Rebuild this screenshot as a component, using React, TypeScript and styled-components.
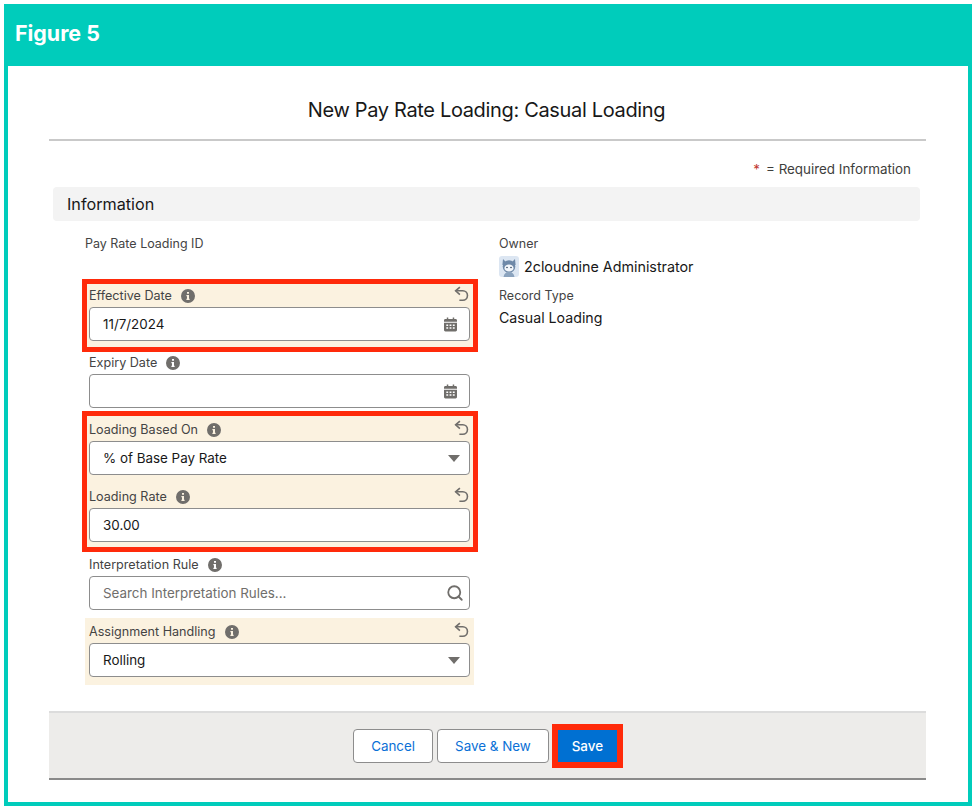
import React from 'react';
import styled, { createGlobalStyle } from 'styled-components';
import { Search } from 'lucide-react';

const GlobalStyle = createGlobalStyle`
  html, body {
    margin: 0;
    padding: 0;
    background: #fff;
    font-family: Inter, "Liberation Sans", sans-serif;
    color: #181818;
  }
  * {
    box-sizing: border-box;
  }
`;

const Frame = styled.div`
  width: 968px;
  height: 802px;
  margin: 4px;
  border: 4px solid #00ccbb;
  border-top: 0;
  background: #fff;
`;

const Banner = styled.div`
  height: 62px;
  margin: 0 -4px;
  padding: 0 11px 4px;
  display: flex;
  align-items: center;
  background: #00ccbb;
  color: #fff;
  font-size: 21.4px;
  font-weight: 700;
`;

const Modal = styled.div`
  padding: 0 42px 0 41px;
`;

const Title = styled.h1`
  height: 75px;
  margin: 0;
  padding: 31px 2px 0 0;
  border-bottom: 2px solid #c9c9c9;
  text-align: center;
  font-size: 20px;
  line-height: 26px;
  font-weight: 400;
  letter-spacing: -0.34px;
`;

const RequiredNote = styled.div`
  height: 46px;
  padding: 19px 15px 0 0;
  text-align: right;
  font-size: 13.4px;
  line-height: 18px;
  color: #3e3e3c;

  span {
    margin-right: 6px;
    color: #c23934;
  }
`;

const SectionHeader = styled.div`
  height: 34px;
  margin: 0 6px 0 4px;
  padding-left: 14px;
  display: flex;
  align-items: center;
  background: #f3f3f3;
  border-radius: 4px;
  font-size: 16.2px;
`;

const FormGrid = styled.div`
  display: grid;
  grid-template-columns: 389px 1fr;
  column-gap: 25px;
  padding: 9px 0 0 36px;
`;

const Column = styled.div`
  display: flex;
  flex-direction: column;
`;

const StaticLabel = styled.div`
  height: 26px;
  font-size: 12.5px;
  line-height: 28px;
  color: #444;
`;

const IdBlock = styled.div`
  height: 52px;
`;

const Highlight = styled.div<{ $top?: number; $bottom?: number }>`
  position: relative;

  &::after {
    content: '';
    position: absolute;
    top: ${props => -(props.$top ?? 3)}px;
    bottom: ${props => -(props.$bottom ?? 3)}px;
    left: -3px;
    right: -4px;
    border: 5px solid #ff2a0a;
    pointer-events: none;
  }
`;

const Field = styled.div<{ $changed?: boolean; $gap?: number }>`
  height: 67px;
  margin-top: ${props => props.$gap ?? 0}px;
  padding: 0 4px;
  background: ${props => (props.$changed ? '#fbf2e0' : 'transparent')};
`;

const LabelRow = styled.div`
  height: 25px;
  display: flex;
  align-items: center;
  gap: 9px;
  padding-top: 2px;
  font-size: 12.6px;
  color: #444;
`;

const ResetSvg = styled.svg`
  width: 15px;
  height: 16px;
  margin-left: auto;
  margin-right: 1px;
  margin-top: -4px;
  fill: none;
  stroke: #706e6b;
  stroke-width: 1.5;
`;

const InputBox = styled.div`
  height: 34px;
  padding: 0 8px 0 13px;
  display: flex;
  align-items: center;
  justify-content: space-between;
  background: #fff;
  border: 1px solid #8d8d8d;
  border-radius: 4px;
  font-size: 13.4px;
  color: #181818;
`;

const Placeholder = styled.span`
  color: #706e6b;
`;

const SearchIcon = styled(Search)`
  width: 18px;
  height: 18px;
  margin-right: -3px;
  color: #706e6b;
`;

const Caret = styled.span`
  width: 0;
  height: 0;
  margin-right: 1px;
  border-left: 6px solid transparent;
  border-right: 6px solid transparent;
  border-top: 7px solid #706e6b;
`;

const CalendarSvg = styled.svg`
  width: 13px;
  height: 15px;
  margin-right: 4px;
  fill: #706e6b;
`;

const InfoSvg = styled.svg`
  width: 14px;
  height: 14px;
  fill: #706e6b;
`;

const OwnerRow = styled.div`
  height: 26px;
  margin-top: -3px;
  margin-bottom: 3px;
  display: flex;
  align-items: center;
  gap: 5px;
  font-size: 14.3px;
`;

const RecordValue = styled.div`
  height: 26px;
  font-size: 14.2px;
  line-height: 20px;
`;

const Footer = styled.div`
  height: 69px;
  margin-top: 26px;
  padding-left: 1px;
  display: flex;
  align-items: center;
  justify-content: center;
  gap: 4px;
  background: #edecea;
  border-top: 2px solid #dcdcdc;
  border-bottom: 2px solid #8a8a8a;
`;

const Button = styled.button<{ $primary?: boolean }>`
  height: ${props => (props.$primary ? '44px' : '34px')};
  width: ${props => (props.$primary ? '71px' : 'auto')};
  margin-left: ${props => (props.$primary ? '-1px' : '0')};
  padding: ${props => (props.$primary ? '0' : '0 17px')};
  background: ${props => (props.$primary ? '#0070d2' : '#fff')};
  border: ${props => (props.$primary ? '6px solid #ff2a0a' : '1px solid #8d8d8d')};
  border-radius: ${props => (props.$primary ? '0' : '4px')};
  color: ${props => (props.$primary ? '#fff' : '#0a70d6')};
  font-family: inherit;
  font-size: 13.4px;
  font-weight: ${props => (props.$primary ? 500 : 400)};
`;

function InfoIcon() {
  return (
    <InfoSvg viewBox="0 0 14 14">
      <path
        fillRule="evenodd"
        d="M7 0a7 7 0 1 1 0 14A7 7 0 0 1 7 0ZM6 3v1.8h2V3H6Zm-.6 3v1.2H6v2.6h-.6V11h3.2V9.8H8V6H5.4Z"
      />
    </InfoSvg>
  );
}

function ResetIcon() {
  return (
    <ResetSvg viewBox="0 0 14 15">
      <path d="M5.500 1 1.500 4.500l4 3.500" />
      <path d="M1.500 4.500H8.200a4.400 4.400 0 0 1 0 8.800H5" />
    </ResetSvg>
  );
}

function CalendarIcon() {
  return (
    <CalendarSvg viewBox="0 0 14 15">
      <path
        fillRule="evenodd"
        d="M3 0h1.6v1.6h4.8V0H11v1.6h1.5c.8 0 1.5.7 1.5 1.5v1.4H0V3.1c0-.8.7-1.5 1.5-1.5H3V0ZM0 5.6h14v7.9c0 .8-.7 1.5-1.5 1.5h-11C.7 15 0 14.300 0 13.500V5.600Zm2.500 1.800v1.600h2V7.400h-2Zm3.500 0v1.600h2V7.400H6Zm3.500 0v1.600h2V7.400h-2Zm-7 3v1.600h2v-1.600h-2Zm3.500 0v1.600h2v-1.600H6Zm3.500 0v1.600h2v-1.600h-2Z"
      />
    </CalendarSvg>
  );
}

function Avatar() {
  return (
    <svg width="20" height="21" viewBox="0 0 20 21">
      <rect width="20" height="21" rx="3" fill="#dce6f2" />
      <path d="M4 3l3 3h6l3-3 .6 6H3.400z" fill="#6f89a8" />
      <circle cx="10" cy="10.500" r="6.300" fill="#6f89a8" />
      <ellipse cx="10" cy="12" rx="4.600" ry="3.600" fill="#f4f7fb" />
      <circle cx="8" cy="11.500" r=".8" fill="#33475f" />
      <circle cx="12" cy="11.500" r=".8" fill="#33475f" />
      <path d="M4.500 21c.5-3.500 2.500-5 5.500-5s5 1.500 5.500 5z" fill="#8ba3be" />
    </svg>
  );
}

type FieldRowProps = {
  label: string;
  changed?: boolean;
  gap?: number;
  children: React.ReactNode;
};

function FieldRow({ label, changed, gap, children }: FieldRowProps) {
  return (
    <Field $changed={changed} $gap={gap}>
      <LabelRow>
        {label}
        <InfoIcon />
        {changed && <ResetIcon />}
      </LabelRow>
      <InputBox>{children}</InputBox>
    </Field>
  );
}

export default function App(): JSX.Element {
  return (
    <>
      <GlobalStyle />
      <Frame>
        <Banner>Figure 5</Banner>
        <Modal>
          <Title>New Pay Rate Loading: Casual Loading</Title>
          <RequiredNote>
            <span>*</span>= Required Information
          </RequiredNote>
          <SectionHeader>Information</SectionHeader>
          <FormGrid>
            <Column>
              <IdBlock>
                <StaticLabel>Pay Rate Loading ID</StaticLabel>
              </IdBlock>
              <Highlight>
                <FieldRow label="Effective Date" changed>
                  <span>11/7/2024</span>
                  <CalendarIcon />
                </FieldRow>
              </Highlight>
              <FieldRow label="Expiry Date">
                <span />
                <CalendarIcon />
              </FieldRow>
              <Highlight $top={5} $bottom={2}>
                <FieldRow label="Loading Based On" changed>
                  <span>% of Base Pay Rate</span>
                  <Caret />
                </FieldRow>
                <FieldRow label="Loading Rate" changed>
                  <span>30.00</span>
                </FieldRow>
              </Highlight>
              <FieldRow label="Interpretation Rule" gap={1}>
                <Placeholder>Search Interpretation Rules...</Placeholder>
                <SearchIcon strokeWidth={2.4} />
              </FieldRow>
              <FieldRow label="Assignment Handling" changed>
                <span>Rolling</span>
                <Caret />
              </FieldRow>
            </Column>
            <Column>
              <StaticLabel>Owner</StaticLabel>
              <OwnerRow>
                <Avatar />
                2cloudnine Administrator
              </OwnerRow>
              <StaticLabel>Record Type</StaticLabel>
              <RecordValue>Casual Loading</RecordValue>
            </Column>
          </FormGrid>
          <Footer>
            <Button>Cancel</Button>
            <Button>Save &amp; New</Button>
            <Button $primary>Save</Button>
          </Footer>
        </Modal>
      </Frame>
    </>
  );
}
